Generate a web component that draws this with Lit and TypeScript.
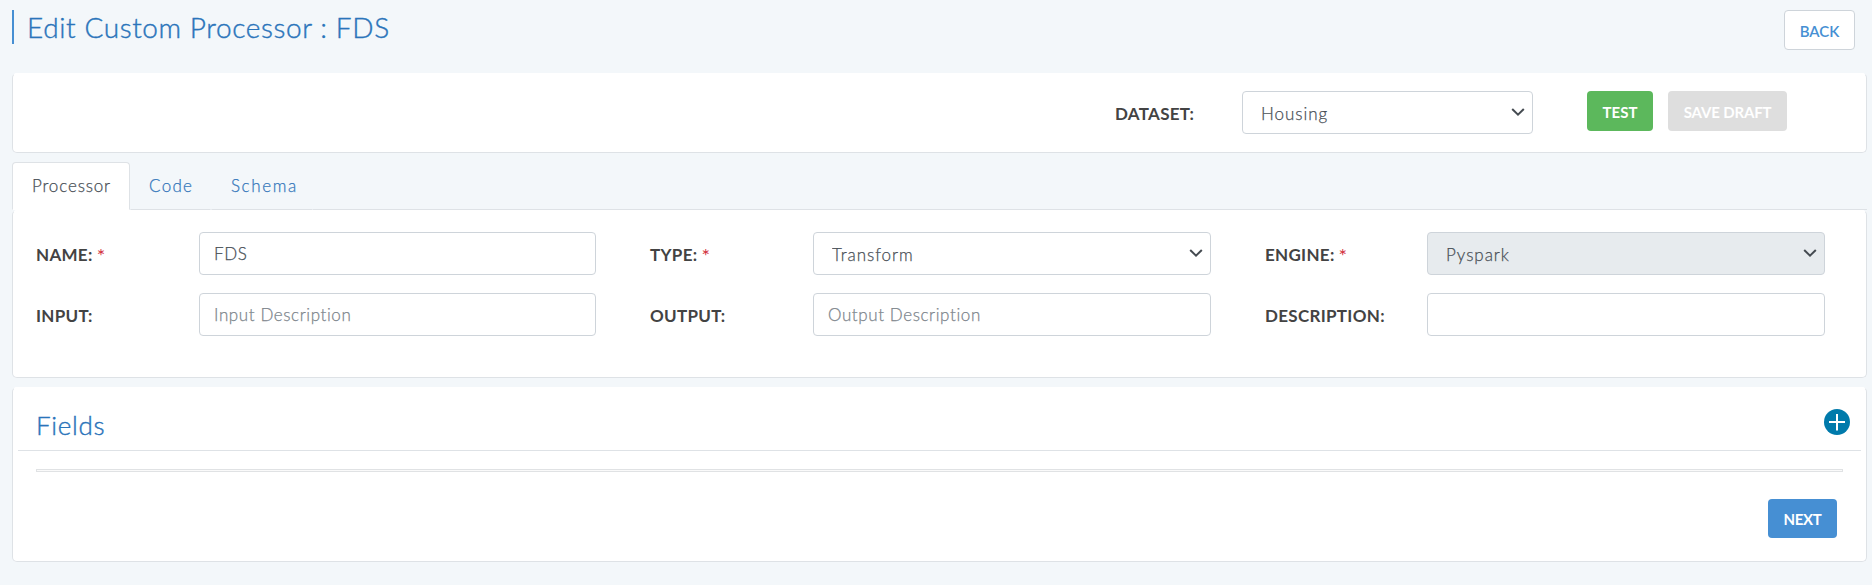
import { LitElement, html, css, nothing } from "lit";
import { customElement, property, state } from "lit/decorators.js";
import { classMap } from "lit/directives/class-map.js";

@customElement("select-box")
class SelectBox extends LitElement {
  @property() value = "";
  @property({ type: Boolean }) disabled = false;

  static styles = css`
    :host { display: grid; height: 43px; }
    select, svg { grid-area: 1 / 1; }
    select {
      appearance: none; box-sizing: border-box; width: 100%; height: 43px; margin: 0;
      padding: 1px 40px 0 18px; border: 1px solid #ced4da; border-radius: 4px;
      background: #fff; color: #495057; opacity: 1; -webkit-text-stroke: 0.25px #495057;
      font: 300 17px Lato, sans-serif; letter-spacing: 0.95px;
    }
    select:disabled { background: #e7ebee; }
    svg { justify-self: end; margin: 16px 8px 0 0; width: 14px; height: 10px; pointer-events: none; }
  `;

  render() {
    return html`
      <select ?disabled=${this.disabled}><option>${this.value}</option></select>
      <svg viewBox="0 0 14 10"><path d="M1.2 2 L7 7.6 L12.8 2" fill="none" stroke="#454b51" stroke-width="2" /></svg>
    `;
  }
}

interface Field {
  label: string;
  required?: boolean;
  select?: boolean;
  disabled?: boolean;
  value?: string;
  placeholder?: string;
}

const FIELDS: Field[] = [
  { label: "NAME:", required: true, value: "FDS" },
  { label: "TYPE:", required: true, select: true, value: "Transform" },
  { label: "ENGINE:", required: true, select: true, disabled: true, value: "Pyspark" },
  { label: "INPUT:", placeholder: "Input Description" },
  { label: "OUTPUT:", placeholder: "Output Description" },
  { label: "DESCRIPTION:" },
];

@customElement("app-root")
class AppRoot extends LitElement {
  @state() private tab = "Processor";

  static styles = css`
    :host {
      display: block; box-sizing: border-box; height: 585px; padding: 10px 5px 0 12px;
      background: #f3f7fa; color: #495057; font: 300 17px/20px Lato, sans-serif; overflow: hidden;
    }
    * { box-sizing: border-box; }
    h1, h2 { margin: 0; font-weight: 300; color: #2a74ba; -webkit-text-stroke: 0.4px #2a74ba; }
    button { margin: 0; border: 0; border-radius: 4px; font: 700 15px/20px Lato, sans-serif; color: #fff; padding: 0; }
    .head { display: flex; justify-content: space-between; height: 63px; padding-right: 12px; }
    h1 { height: 34px; border-left: 2px solid #468fd3; padding: 1px 0 0 13px; font-size: 28px; line-height: 32px; letter-spacing: 0.6px; }
    .back { width: 71px; height: 40px; padding-top: 1px; border: 1px solid #ced4da; background: #fff; color: #468fd3; font-weight: 600; }
    .card { background: #fff; border: 1px solid #dee2e6; border-top-color: #fff; border-radius: 5px; }
    .bar { display: flex; height: 80px; padding: 17px 79px 0 0; justify-content: flex-end; }
    .label { font-weight: 700; color: #434343; letter-spacing: 0.3px; white-space: nowrap; }
    .bar .label { width: 127px; padding-top: 13px; }
    .bar select-box { width: 291px; margin-right: 54px; }
    .test { width: 66px; height: 40px; margin-right: 15px; padding-top: 2px; background: #5cb85c; }
    .draft { width: 119px; height: 40px; padding-top: 2px; background: #dedede; letter-spacing: -0.15px; }
    .tabs { display: flex; height: 48px; margin-top: 9px; }
    .tab {
      height: 48px; border: 1px solid transparent; border-bottom-color: #dee2e6; border-radius: 4px 4px 0 0;
      padding: 13px 0 0 19px; color: #3577bb; letter-spacing: 0.85px; -webkit-text-stroke: 0.25px currentColor;
    }
    .tab.processor { width: 118px; }
    .tab.code { width: 81px; padding-left: 18px; letter-spacing: 1.3px; }
    .tab.schema { width: 102px; letter-spacing: 1.6px; }
    .tab.active { background: #fff; border-color: #dee2e6 #dee2e6 #fff; color: #495057; }
    .rest { flex: 1; border-bottom: 1px solid #dee2e6; }
    .form {
      display: grid; grid-template-columns: 560px 561px 560px; column-gap: 54px; row-gap: 18px;
      grid-template-rows: 43px 43px; height: 168px; padding: 21px 0 0 23px;
    }
    .cell { display: grid; grid-template-columns: 1fr 398px; align-items: start; }
    .cell:nth-child(3n + 1) { grid-template-columns: 1fr 397px; }
    .cell .label { padding-top: 13px; }
    .req { color: #d2303c; font-size: 20px; font-weight: 400; line-height: 0; margin-left: 4px; vertical-align: -2px; }
    input {
      width: 100%; height: 43px; margin: 0; border: 1px solid #ced4da; border-radius: 4px; background: #fff;
      padding: 0 14px 1px; color: #495057; font: 300 17px Lato, sans-serif; letter-spacing: 0.6px;
      -webkit-text-stroke: 0.25px #495057;
    }
    input::placeholder { color: #7d858c; opacity: 1; -webkit-text-stroke: 0.25px #7d858c; }
    .fields { height: 175px; margin-top: 9px; padding: 0 5px; }
    .fields-head { display: flex; justify-content: space-between; height: 63px; padding: 21px 11px 0 18px; border-bottom: 1px solid #dee2e6; }
    h2 { font-size: 26px; line-height: 32px; letter-spacing: 0.7px; }
    .add { width: 26px; height: 26px; }
    .strip { height: 3px; margin: 18px 18px 0; border: 1px solid #e0e2e4; background: #fafafa; }
    .foot { display: flex; justify-content: flex-end; padding: 27px 24px 0 0; }
    .next { width: 69px; height: 39px; padding-top: 1px; background: #468fd3; letter-spacing: -0.3px; }
  `;

  private renderField(f: Field) {
    return html`
      <div class="cell">
        <div class="label">${f.label}${f.required ? html`<span class="req">*</span>` : nothing}</div>
        ${f.select
          ? html`<select-box .value=${f.value ?? ""} ?disabled=${!!f.disabled}></select-box>`
          : html`<input .value=${f.value ?? ""} placeholder=${f.placeholder ?? ""} />`}
      </div>
    `;
  }

  render() {
    return html`
      <div class="head">
        <h1>Edit Custom Processor : FDS</h1>
        <button class="back">BACK</button>
      </div>
      <div class="card bar">
        <div class="label">DATASET:</div>
        <select-box value="Housing"></select-box>
        <button class="test">TEST</button>
        <button class="draft">SAVE DRAFT</button>
      </div>
      <div class="tabs">
        ${["Processor", "Code", "Schema"].map(
          (t) => html`<div
            class=${classMap({ tab: true, [t.toLowerCase()]: true, active: t === this.tab })}
            @click=${() => (this.tab = t)}
          >${t}</div>`
        )}
        <div class="rest"></div>
      </div>
      <div class="card form">${FIELDS.map((f) => this.renderField(f))}</div>
      <div class="card fields">
        <div class="fields-head">
          <h2>Fields</h2>
          <svg class="add" viewBox="0 0 26 26">
            <circle cx="13" cy="13" r="13" fill="#007aab" />
            <path d="M5 13H21M13 5V21.5" stroke="#fff" stroke-width="2" />
          </svg>
        </div>
        <div class="strip"></div>
        <div class="foot"><button class="next">NEXT</button></div>
      </div>
    `;
  }
}
